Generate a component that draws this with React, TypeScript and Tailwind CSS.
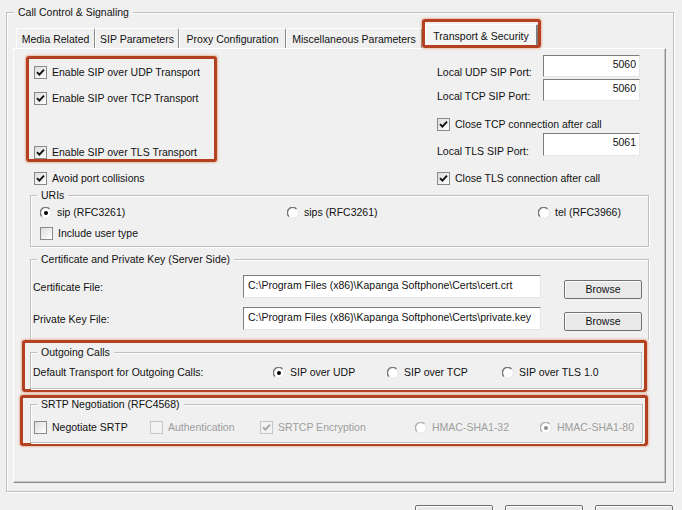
import clsx from 'clsx'
import type { ReactNode } from 'react'

const RED = 'rounded-[3px] border-[3px] border-[#b3401e] shadow-[0_0_2px_1px_rgba(226,140,104,0.55)]'

function Box({ checked = false, disabled = false }: { checked?: boolean; disabled?: boolean }) {
  return (
    <span
      className={clsx(
        'flex h-[13px] w-[13px] shrink-0 items-center justify-center border',
        disabled ? 'border-[#c6c6c6] bg-[#f3f3f3]' : 'border-[#8a8a8a] bg-gradient-to-br from-[#dcdcdc] to-white',
      )}
    >
      {checked && (
        <svg width="9" height="9" viewBox="0 0 9 9">
          <path d="M1 4.1 L3.4 6.6 L8 1.6" fill="none" stroke={disabled ? '#a6a6a6' : '#111'} strokeWidth="1.9" />
        </svg>
      )}
    </span>
  )
}

function Check({ label, checked, disabled, className }: { label: string; checked?: boolean; disabled?: boolean; className?: string }) {
  return (
    <div className={clsx('flex h-[13px] shrink-0 items-center gap-[5px]', className)}>
      <Box checked={checked} disabled={disabled} />
      <span className={clsx('whitespace-nowrap', disabled && 'text-[#9d9d9d]')}>{label}</span>
    </div>
  )
}

function Radio({ label, checked, disabled, className }: { label: string; checked?: boolean; disabled?: boolean; className?: string }) {
  return (
    <div className={clsx('flex h-[13px] shrink-0 items-center gap-[5px]', className)}>
      <svg width="12" height="12" viewBox="0 0 12 12" className="shrink-0">
        <circle cx="6" cy="6" r="5.3" fill="#fff" stroke="#e4e4e4" strokeWidth="1" />
        <path d="M1.9 9.4 A5 5 0 0 1 9.4 1.9" fill="none" stroke={disabled ? '#b2b2b2' : '#777'} strokeWidth="1.4" />
        {checked && <circle cx="6" cy="6" r="2" fill={disabled ? '#8c8c8c' : '#000'} />}
      </svg>
      <span className={clsx('whitespace-nowrap', disabled && 'text-[#9d9d9d]')}>{label}</span>
    </div>
  )
}

function Group({ title, legend = 'ml-[6px]', className, children }: { title: string; legend?: string; className?: string; children: ReactNode }) {
  return (
    <fieldset className={clsx('border border-[#c0c0c0] shadow-[inset_1px_1px_0_#fff,1px_1px_0_#fff]', className)}>
      <legend className={clsx('bg-[#f0f0f0] px-[4px] leading-[13px]', legend)}>{title}</legend>
      {children}
    </fieldset>
  )
}

function Field({ value, className, right }: { value: string; className?: string; right?: boolean }) {
  return (
    <div
      className={clsx(
        'shrink-0 overflow-hidden whitespace-nowrap border border-t-[#7d7d7d] border-l-[#7d7d7d] border-r-[#e6e6e6] border-b-[#e6e6e6] bg-white',
        right ? 'pr-[3px] pt-[2px] text-right' : 'pl-[4px] pt-[3px]',
        className,
      )}
    >
      {value}
    </div>
  )
}

function Button({ label, className }: { label?: string; className?: string }) {
  return (
    <div
      className={clsx(
        'flex shrink-0 items-center justify-center rounded-[2px] border border-[#707070] bg-[#e9e9e9] shadow-[inset_1px_1px_0_#fdfdfd]',
        className,
      )}
    >
      {label}
    </div>
  )
}

const tabs = [
  { title: 'Media Related', w: 'w-[79px]' },
  { title: 'SIP Parameters', w: 'w-[84px]' },
  { title: 'Proxy Configuration', w: 'w-[107px]' },
  { title: 'Miscellaneous Parameters', w: 'w-[136px]' },
]

export default function App() {
  return (
    <div className="h-[510px] w-[682px] overflow-hidden bg-[#f0f0f0] pl-[6px] pt-[6px] font-['Liberation_Sans',Arial,sans-serif] text-[10.5px] leading-[13px] text-[#111]">
      <Group title="Call Control & Signaling" legend="ml-[7px]" className="h-[486px] w-[668px]">
        <div className="px-[6px]">
          {/* tab strip */}
          <div className="flex h-[29px] items-end pl-[3px]">
            {tabs.map((tab) => (
              <div
                key={tab.title}
                className={clsx(
                  'flex h-[20px] shrink-0 justify-center whitespace-nowrap rounded-t-[2px] border border-b-0 border-l-white border-t-white border-r-[#8a8a8a] pt-[4px]',
                  tab.w,
                )}
              >
                {tab.title}
              </div>
            ))}
            <div className={clsx('h-[29px] w-[119px] shrink-0', RED)}>
              <div className="mt-[2px] flex h-[21px] justify-center whitespace-nowrap rounded-t-[2px] border border-b-0 border-r-2 border-l-white border-t-white border-r-[#7c7c7c] bg-[#f5f5f5] pt-[5px]">
                Transport &amp; Security
              </div>
            </div>
          </div>

          {/* tab page */}
          <div className="h-[435px] w-[653px] border border-b-[#8c8c8c] border-l-white border-r-[#8c8c8c] border-t-white shadow-[inset_-1px_-1px_0_#c8c8c8]">
            <div className="flex">
              <div className="w-[423px] pl-[12px]">
                <div className={clsx('mt-[7px] flex h-[106px] w-[191px] flex-col pl-[5px] pt-[7px]', RED)}>
                  <Check label="Enable SIP over UDP Transport" checked />
                  <Check label="Enable SIP over TCP Transport" checked className="mt-[13px]" />
                  <Check label="Enable SIP over TLS Transport" checked className="mt-[41px]" />
                </div>
                <Check label="Avoid port collisions" checked className="ml-[8px] mt-[10px]" />
              </div>
              <div className="flex flex-col">
                <div className="mt-[6px] flex h-[22px] items-start">
                  <span className="mt-[11px] w-[106px] whitespace-nowrap">Local UDP SIP Port:</span>
                  <Field value="5060" right className="h-[22px] w-[97px]" />
                </div>
                <div className="mt-[2px] flex h-[22px] items-start">
                  <span className="mt-[11px] w-[106px] whitespace-nowrap">Local TCP SIP Port:</span>
                  <Field value="5060" right className="h-[22px] w-[97px]" />
                </div>
                <Check label="Close TCP connection after call" checked className="mt-[17px]" />
                <div className="mt-[2px] flex h-[23px] items-start">
                  <span className="mt-[12px] w-[106px] whitespace-nowrap">Local TLS SIP Port:</span>
                  <Field value="5061" right className="h-[23px] w-[97px]" />
                </div>
                <Check label="Close TLS connection after call" checked className="mt-[16px]" />
              </div>
            </div>

            <Group title="URIs" className="ml-[16px] mt-[4px] w-[619px] pb-[6px]">
              <div className="pl-[9px] pt-[4px]">
                <div className="flex">
                  <Radio label="sip (RFC3261)" checked className="w-[247px]" />
                  <Radio label="sips (RFC3261)" className="w-[251px]" />
                  <Radio label="tel (RFC3966)" />
                </div>
                <Check label="Include user type" className="mt-[8px]" />
              </div>
            </Group>

            <Group title="Certificate and Private Key (Server Side)" className="ml-[16px] mt-[6px] w-[619px] border-b-0 pb-[10px]">
              <div className="mt-[9px] flex h-[23px] items-start">
                <span className="mt-[6px] w-[212px] pl-[2px]">Certificate File:</span>
                <Field value="C:\Program Files (x86)\Kapanga Softphone\Certs\cert.crt" className="h-[23px] w-[298px]" />
                <Button label="Browse" className="ml-[23px] mt-[5px] h-[19px] w-[78px]" />
              </div>
              <div className="mt-[9px] flex h-[23px] items-start">
                <span className="mt-[6px] w-[212px] pl-[2px]">Private Key File:</span>
                <Field value="C:\Program Files (x86)\Kapanga Softphone\Certs\private.key" className="h-[23px] w-[298px]" />
                <Button label="Browse" className="ml-[23px] mt-[5px] h-[19px] w-[78px]" />
              </div>
            </Group>

            <div className={clsx('ml-[8px] h-[52px] w-[625px]', RED)}>
              <Group title="Outgoing Calls" className="ml-[5px] mr-[2px] mt-[3px] pb-[9px]">
                <div className="mt-[7px] flex pl-[2px]">
                  <span className="w-[240px] whitespace-nowrap">Default Transport for Outgoing Calls:</span>
                  <Radio label="SIP over UDP" checked className="w-[114px]" />
                  <Radio label="SIP over TCP" className="w-[115px]" />
                  <Radio label="SIP over TLS 1.0" />
                </div>
              </Group>
            </div>

            <div className={clsx('ml-[6px] mt-[3px] h-[51px] w-[628px]', RED)}>
              <Group title="SRTP Negotiation (RFC4568)" className="ml-[7px] mr-[2px] pb-[8px]">
                <div className="mt-[10px] flex pl-[3px]">
                  <Check label="Negotiate SRTP" className="w-[116px]" />
                  <Check label="Authentication" disabled className="w-[110px]" />
                  <Check label="SRTCP Encryption" checked disabled className="w-[155px]" />
                  <Radio label="HMAC-SHA1-32" disabled className="w-[125px]" />
                  <Radio label="HMAC-SHA1-80" checked disabled />
                </div>
              </Group>
            </div>
          </div>
        </div>
      </Group>

      <div className="mt-[13px] flex justify-end gap-[12px] pr-[9px]">
        <Button className="h-[23px] w-[78px]" />
        <Button className="h-[23px] w-[78px]" />
        <Button className="h-[23px] w-[78px]" />
      </div>
    </div>
  )
}
